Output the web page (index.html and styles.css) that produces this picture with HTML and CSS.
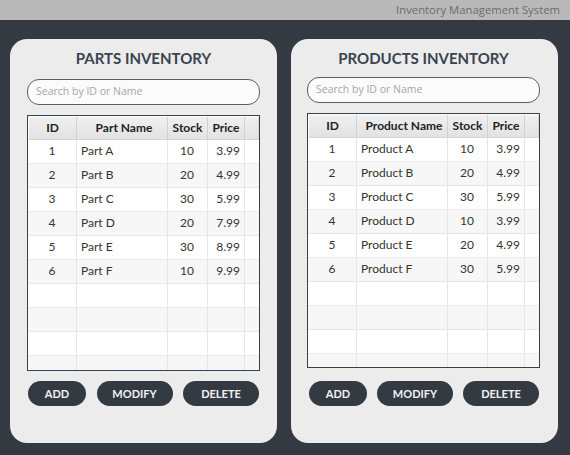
FILE: index.html
```html
<!DOCTYPE html>
<html>
<head>
<meta charset="utf-8">
<link rel="stylesheet" href="styles.css">
</head>
<body>
<div class="titlebar">Inventory Management System</div>
<div class="main">
  <section class="card card-parts">
    <h1 class="card-title">PARTS INVENTORY</h1>
    <div class="search">Search by ID or Name</div>
    <div class="table">
      <div class="row head"><div class="c c-id">ID</div><div class="c c-name">Part Name</div><div class="c c-stock">Stock</div><div class="c c-price">Price</div><div class="c c-fill"></div></div>
      <div class="row"><div class="c c-id">1</div><div class="c c-name">Part A</div><div class="c c-stock">10</div><div class="c c-price">3.99</div><div class="c c-fill"></div></div>
      <div class="row alt"><div class="c c-id">2</div><div class="c c-name">Part B</div><div class="c c-stock">20</div><div class="c c-price">4.99</div><div class="c c-fill"></div></div>
      <div class="row"><div class="c c-id">3</div><div class="c c-name">Part C</div><div class="c c-stock">30</div><div class="c c-price">5.99</div><div class="c c-fill"></div></div>
      <div class="row alt"><div class="c c-id">4</div><div class="c c-name">Part D</div><div class="c c-stock">20</div><div class="c c-price">7.99</div><div class="c c-fill"></div></div>
      <div class="row"><div class="c c-id">5</div><div class="c c-name">Part E</div><div class="c c-stock">30</div><div class="c c-price">8.99</div><div class="c c-fill"></div></div>
      <div class="row alt"><div class="c c-id">6</div><div class="c c-name">Part F</div><div class="c c-stock">10</div><div class="c c-price">9.99</div><div class="c c-fill"></div></div>
      <div class="row"><div class="c c-id"></div><div class="c c-name"></div><div class="c c-stock"></div><div class="c c-price"></div><div class="c c-fill"></div></div>
      <div class="row alt"><div class="c c-id"></div><div class="c c-name"></div><div class="c c-stock"></div><div class="c c-price"></div><div class="c c-fill"></div></div>
      <div class="row"><div class="c c-id"></div><div class="c c-name"></div><div class="c c-stock"></div><div class="c c-price"></div><div class="c c-fill"></div></div>
      <div class="row alt"><div class="c c-id"></div><div class="c c-name"></div><div class="c c-stock"></div><div class="c c-price"></div><div class="c c-fill"></div></div>
    </div>
    <div class="buttons">
      <button class="btn btn-add">ADD</button>
      <button class="btn btn-mod">MODIFY</button>
      <button class="btn btn-del">DELETE</button>
    </div>
  </section>
  <section class="card card-products">
    <h1 class="card-title">PRODUCTS INVENTORY</h1>
    <div class="search">Search by ID or Name</div>
    <div class="table">
      <div class="row head"><div class="c c-id">ID</div><div class="c c-name">Product Name</div><div class="c c-stock">Stock</div><div class="c c-price">Price</div><div class="c c-fill"></div></div>
      <div class="row"><div class="c c-id">1</div><div class="c c-name">Product A</div><div class="c c-stock">10</div><div class="c c-price">3.99</div><div class="c c-fill"></div></div>
      <div class="row alt"><div class="c c-id">2</div><div class="c c-name">Product B</div><div class="c c-stock">20</div><div class="c c-price">4.99</div><div class="c c-fill"></div></div>
      <div class="row"><div class="c c-id">3</div><div class="c c-name">Product C</div><div class="c c-stock">30</div><div class="c c-price">5.99</div><div class="c c-fill"></div></div>
      <div class="row alt"><div class="c c-id">4</div><div class="c c-name">Product D</div><div class="c c-stock">10</div><div class="c c-price">3.99</div><div class="c c-fill"></div></div>
      <div class="row"><div class="c c-id">5</div><div class="c c-name">Product E</div><div class="c c-stock">20</div><div class="c c-price">4.99</div><div class="c c-fill"></div></div>
      <div class="row alt"><div class="c c-id">6</div><div class="c c-name">Product F</div><div class="c c-stock">30</div><div class="c c-price">5.99</div><div class="c c-fill"></div></div>
      <div class="row"><div class="c c-id"></div><div class="c c-name"></div><div class="c c-stock"></div><div class="c c-price"></div><div class="c c-fill"></div></div>
      <div class="row alt"><div class="c c-id"></div><div class="c c-name"></div><div class="c c-stock"></div><div class="c c-price"></div><div class="c c-fill"></div></div>
      <div class="row"><div class="c c-id"></div><div class="c c-name"></div><div class="c c-stock"></div><div class="c c-price"></div><div class="c c-fill"></div></div>
      <div class="row alt"><div class="c c-id"></div><div class="c c-name"></div><div class="c c-stock"></div><div class="c c-price"></div><div class="c c-fill"></div></div>
    </div>
    <div class="buttons">
      <button class="btn btn-add">ADD</button>
      <button class="btn btn-mod">MODIFY</button>
      <button class="btn btn-del">DELETE</button>
    </div>
  </section>
</div>
</body>
</html>
```
FILE: styles.css
```css
* { box-sizing: border-box; }
html, body { margin: 0; padding: 0; }
body {
  width: 570px;
  height: 455px;
  background: #343a42;
  font-family: "Lato", "Noto Sans", sans-serif;
  overflow: hidden;
}
.titlebar {
  height: 20px;
  background: #b9b9b9;
  color: #6b6b6b;
  font-family: "Open Sans", "Noto Sans", sans-serif;
  font-size: 11.3px;
  line-height: 20px;
  text-align: right;
  padding-right: 10px;
}
.main {
  display: flex;
  gap: 14px;
  padding: 19px 12px 0 10px;
}
.card {
  width: 267px;
  height: 404px;
  background: #ececec;
  border-radius: 17px;
  padding: 0 17px 0 17px;
  display: flex;
  flex-direction: column;
}
.card-products { padding-left: 16px; padding-right: 18px; }
.card-title {
  margin: 9px 0 0 0;
  height: 21px;
  font-family: "Lato", "Noto Sans", sans-serif;
  font-weight: 700;
  font-size: 15px;
  line-height: 21px;
  letter-spacing: 0;
  color: #3a4350;
  text-align: center;
}
.search {
  margin-top: 10px;
  height: 26px;
  border: 1.5px solid #5a5d62;
  border-radius: 12px;
  background: #fbfbfb;
  color: #a6a6a6;
  font-family: "Open Sans", "Noto Sans", sans-serif;
  font-size: 10.5px;
  line-height: 23px;
  padding-left: 8px;
}
.card-products .search { margin-top: 8px; height: 26px; }
.table {
  margin-top: 10px;
  height: 256px;
  border: 1px solid #3c4048;
  background: #fdfdfd;
  overflow: hidden;
}
.card-products .table { margin-top: 10px; height: 255px; }
.row {
  display: flex;
  height: 24px;
  border-bottom: 1px solid #e9e9e9;
  font-size: 12px;
  color: #333;
  background: #ffffff;
}
.row.alt { background: #f7f7f7; }
.row.head {
  height: 23px;
  background: linear-gradient(#f0f0f0, #e2e2e2);
  font-weight: 700;
  color: #222;
  border-bottom: 1px solid #d4d4d4;
  margin: 1px 0 0 1px;
}
.c {
  border-right: 1px solid #e6e6e6;
  line-height: 22px;
  white-space: nowrap;
  overflow: hidden;
}
.row.head .c { text-align: center; border-right: 1px solid #d2d2d2; line-height: 22px; }
.c-id { width: 49px; text-align: center; }
.c-name { width: 91px; padding-left: 4px; }
.c-stock { width: 40px; text-align: right; padding-right: 13px; }
.c-price { width: 37px; text-align: right; padding-right: 4px; }
.c-fill { flex: 1; border-right: none; }
.row.head .c-id { width: 48px; }
.row.head .c-stock { padding-right: 0; }
.row.head .c-price { padding-right: 0; }
.buttons {
  display: flex;
  justify-content: space-between;
  margin-top: 10px;
  padding: 0 1px;
}
.btn {
  height: 25px;
  border: none;
  border-radius: 13px;
  background: #343a42;
  color: #f2f2f2;
  font-family: "Lato", "Noto Sans", sans-serif;
  font-weight: 700;
  font-size: 11px;
  padding: 0;
  letter-spacing: 0;
}
.btn-add { width: 58px; }
.btn-mod { width: 76px; }
.btn-del { width: 76px; }
.card-products .buttons { margin-top: 13px; padding-left: 2px; }
```
